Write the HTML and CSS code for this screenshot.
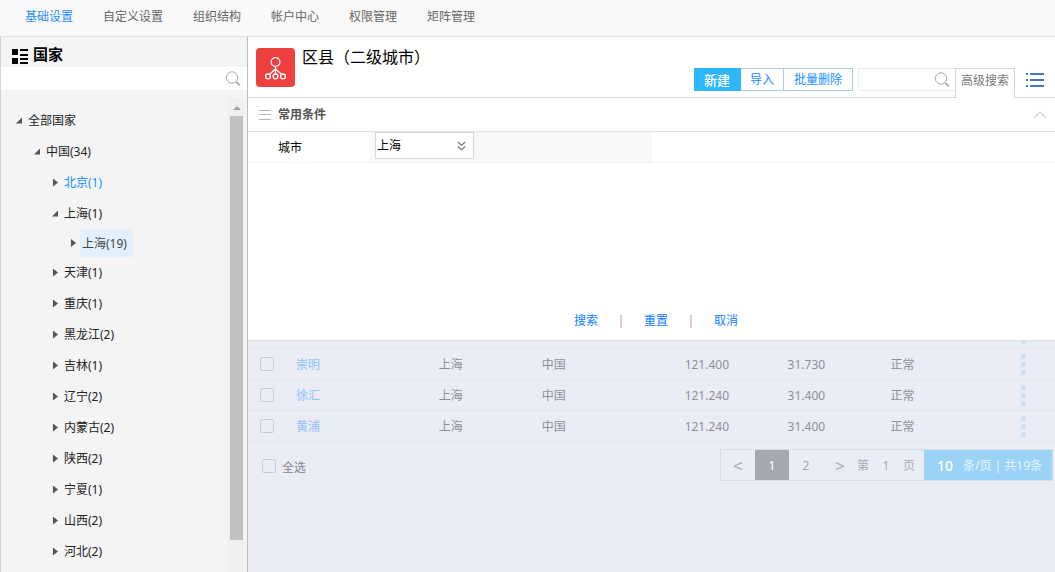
FILE: index.html
```html
<!DOCTYPE html>
<html lang="zh-CN">
<head>
<meta charset="utf-8">
<meta name="viewport" content="width=device-width, initial-scale=1">
<title>基础设置</title>
<link rel="stylesheet" href="styles.css">
</head>
<body>
<nav class="topnav">
  <a class="active" href="#">基础设置</a>
  <a href="#">自定义设置</a>
  <a href="#">组织结构</a>
  <a href="#">帐户中心</a>
  <a href="#">权限管理</a>
  <a href="#">矩阵管理</a>
</nav>
<div class="layout">
  <aside class="sidebar">
    <h2 class="side-title">
      <svg width="16" height="15" viewBox="0 0 16 15" shape-rendering="crispEdges"><path d="M0 0h6v6H0zM0 9h6v6H0zM8 0h8v2H8zM8 5h8v2H8zM8 9h8v2H8zM8 13h8v2H8z"/></svg>
      国家
    </h2>
    <div class="side-search">
      <input type="text" aria-label="搜索国家">
      <button type="button" aria-label="查找"><svg class="glass" width="16" height="16" viewBox="0 0 16 16"><circle cx="7" cy="6.5" r="5.7"/><path class="handle" d="M11.3 11l3.4 3.4"/></svg></button>
    </div>
    <div class="tree-wrap">
      <ul class="tree">
        <li class="open"><a href="#">全部国家</a></li>
        <li class="open l2"><a href="#">中国(34)</a></li>
        <li class="l3"><a class="blue" href="#">北京(1)</a></li>
        <li class="open l3"><a href="#">上海(1)</a></li>
        <li class="l4"><a class="selected" href="#">上海(19)</a></li>
        <li class="l3"><a href="#">天津(1)</a></li>
        <li class="l3"><a href="#">重庆(1)</a></li>
        <li class="l3"><a href="#">黑龙江(2)</a></li>
        <li class="l3"><a href="#">吉林(1)</a></li>
        <li class="l3"><a href="#">辽宁(2)</a></li>
        <li class="l3"><a href="#">内蒙古(2)</a></li>
        <li class="l3"><a href="#">陕西(2)</a></li>
        <li class="l3"><a href="#">宁夏(1)</a></li>
        <li class="l3"><a href="#">山西(2)</a></li>
        <li class="l3"><a href="#">河北(2)</a></li>
      </ul>
      <div class="scrollbar"><span class="scroll-up"></span><span class="thumb"></span></div>
    </div>
  </aside>

  <main class="main">
    <header class="head">
      <svg class="logo" width="39" height="39" viewBox="0 0 39 39"><rect width="39" height="39" rx="4" fill="#ee413f"/><g fill="none" stroke="#fff" stroke-width="1.3"><circle cx="19.5" cy="14" r="4.4"/><circle cx="12" cy="28.4" r="2.4"/><circle cx="19.5" cy="28.4" r="2.4"/><circle cx="27" cy="28.4" r="2.4"/><path d="M19.5 18.5V26M19.5 21l-6 5.3M19.5 21l6 5.3"/></g></svg>
      <h1>区县<span class="paren" lang="zh-TW">（</span>二级城市<span class="paren" lang="zh-TW">）</span></h1>
      <div class="tools">
        <div class="btns">
          <button class="primary" type="button">新建</button>
          <button type="button">导入</button>
          <button type="button">批量删除</button>
        </div>
        <div class="head-search">
          <input type="text" aria-label="搜索">
          <button type="button" aria-label="查找"><svg class="glass" width="16" height="16" viewBox="0 0 16 16"><circle cx="7" cy="6.5" r="5.7"/><path class="handle" d="M11.3 11l3.4 3.4"/></svg></button>
        </div>
        <button class="tab" type="button">高级搜索</button>
        <button class="list-btn" type="button" aria-label="列表"><svg width="18" height="14" viewBox="0 0 18 14" shape-rendering="crispEdges"><path fill="#457ab8" d="M0 0h2v2H0zM4 0h14v2H4zM0 6h2v2H0zM4 6h14v2H4zM0 12h2v2H0zM4 12h14v2H4z"/></svg></button>
      </div>
    </header>

    <div class="content">
      <table class="grid">
        <colgroup><col class="c-check"><col class="c-wide"><col class="c-mid"><col class="c-wide"><col class="c-mid"><col class="c-mid"><col class="c-state"><col></colgroup>
        <tbody>
          <tr><td></td><td></td><td></td><td></td><td></td><td></td><td></td><td class="more"><svg width="5" height="21" viewBox="0 0 5 21"><circle cx="2.5" cy="2.5" r="2.5"/><circle cx="2.5" cy="10.5" r="2.5"/><circle cx="2.5" cy="18.5" r="2.5"/></svg></td></tr>
          <tr><td><input type="checkbox" aria-label="崇明"></td><td><a href="#">崇明</a></td><td>上海</td><td>中国</td><td>121.400</td><td>31.730</td><td>正常</td><td class="more"><svg width="5" height="21" viewBox="0 0 5 21"><circle cx="2.5" cy="2.5" r="2.5"/><circle cx="2.5" cy="10.5" r="2.5"/><circle cx="2.5" cy="18.5" r="2.5"/></svg></td></tr>
          <tr><td><input type="checkbox" aria-label="徐汇"></td><td><a href="#">徐汇</a></td><td>上海</td><td>中国</td><td>121.240</td><td>31.400</td><td>正常</td><td class="more"><svg width="5" height="21" viewBox="0 0 5 21"><circle cx="2.5" cy="2.5" r="2.5"/><circle cx="2.5" cy="10.5" r="2.5"/><circle cx="2.5" cy="18.5" r="2.5"/></svg></td></tr>
          <tr><td><input type="checkbox" aria-label="黄浦"></td><td><a href="#">黄浦</a></td><td>上海</td><td>中国</td><td>121.240</td><td>31.400</td><td>正常</td><td class="more"><svg width="5" height="21" viewBox="0 0 5 21"><circle cx="2.5" cy="2.5" r="2.5"/><circle cx="2.5" cy="10.5" r="2.5"/><circle cx="2.5" cy="18.5" r="2.5"/></svg></td></tr>
        </tbody>
      </table>
      <div class="foot">
        <label class="all"><input type="checkbox"><span>全选</span></label>
        <div class="pager">
          <button class="arrow" type="button">&lt;</button>
          <button class="current" type="button">1</button>
          <button type="button">2</button>
          <button class="arrow" type="button">&gt;</button>
          <label class="goto">第<input type="text" value="1">页</label>
          <div class="size"><strong>10</strong><span>条/页 | 共19条</span></div>
        </div>
      </div>

      <form class="panel">
        <div class="panel-head">
          <svg width="12" height="10" viewBox="0 0 12 10" shape-rendering="crispEdges"><path fill="#b5b5b5" d="M0 0h12v1H0zM0 4h12v1H0zM0 9h12v1H0z"/></svg>
          <h3>常用条件</h3>
          <svg class="fold" width="12" height="7" viewBox="0 0 12 7"><path d="M.5 6.5L6 1l5.500 5.500" fill="none" stroke="#ccc" stroke-width="1.200"/></svg>
        </div>
        <div class="field">
          <label for="city">城市</label>
          <div class="value">
            <div class="select">
              <select id="city"><option>上海</option></select>
              <svg width="9" height="10" viewBox="0 0 9 10"><path d="M.8 1l3.700 3.200L8.200 1M.8 5.500l3.700 3.200 3.700-3.200" fill="none" stroke="#777" stroke-width="1.200"/></svg>
            </div>
          </div>
        </div>
        <div class="actions">
          <button type="button">搜索</button><i></i><button type="button">重置</button><i></i><button type="button">取消</button>
        </div>
      </form>
    </div>
  </main>
</div>
</body>
</html>
```

FILE: styles.css
```css
* { box-sizing: border-box; }
body {
  margin: 0;
  height: 100vh;
  display: flex;
  flex-direction: column;
  overflow: hidden;
  font: 12px/18px "Noto Sans", "Noto Sans CJK SC", sans-serif;
  color: #222;
  background: #fff;
}
a { color: inherit; text-decoration: none; }
button, input, select { font: inherit; color: inherit; margin: 0; padding: 0; border: 0; background: none; outline: 0; }
svg { display: block; flex: none; }
h1, h2, h3, ul { margin: 0; padding: 0; }
.glass { fill: none; stroke: #aaa; stroke-width: 1; }
.glass .handle { stroke-width: 2; }

.topnav {
  flex: none;
  display: flex;
  align-items: center;
  gap: 30px;
  height: 37px;
  padding: 0 25px 2px;
  background: #f8f8f8;
  border-bottom: 1px solid #e2e2e2;
  color: #666;
}
.topnav .active { color: #2690f5; }

.layout { flex: 1; display: flex; min-height: 0; }

.sidebar {
  flex: 0 0 248px;
  display: flex;
  flex-direction: column;
  background: #f4f4f4;
  border-left: 1px solid #d4d4d4;
  border-right: 1px solid #bdbdbd;
}
.side-title {
  display: flex;
  align-items: center;
  gap: 5px;
  height: 30px;
  padding: 4px 11px 0;
  font-size: 15px;
  line-height: 20px;
  color: #000;
}
.side-title svg { margin-top: 4px; }
.side-search { display: flex; height: 23px; background: #fff; padding-right: 6px; align-items: center; }
.side-search input { flex: 1; min-width: 0; height: 23px; padding: 0 8px; }
.tree-wrap { flex: 1; display: flex; min-height: 0; margin-top: 8px; }
.tree { flex: 1; list-style: none; padding-top: 7px; overflow: hidden; }
.tree li { display: flex; align-items: center; gap: 6px; height: 31px; padding-left: 15px; white-space: nowrap; }
.tree li::before { content: ""; width: 6px; height: 8px; background: #555; clip-path: polygon(16% 0, 100% 50%, 16% 100%); }
.tree li.open::before { height: 6px; clip-path: polygon(100% 0, 100% 100%, 0 100%); }
.tree .l2 { padding-left: 33px; }
.tree .l3 { padding-left: 51px; }
.tree .l4 { padding-left: 69px; height: 28px; gap: 4px; }
.tree .blue { color: #1890ff; }
.tree .selected { background: #e2f0fc; color: #444; padding: 1px 6px 0 2px; line-height: 27px; }
.scrollbar { flex: 0 0 17px; display: flex; flex-direction: column; align-items: center; background: #f0f0f0; margin-right: 2px; padding-bottom: 32px; }
.scroll-up { height: 18px; display: flex; align-items: center; padding-top: 2px; }
.scroll-up::before { content: ""; border: 4px solid transparent; border-top: 0; border-bottom-color: #a0a0a0; }
.thumb { flex: 1; width: 13px; background: #c0c0c0; }

.main { flex: 1; min-width: 0; display: flex; flex-direction: column; }
.head { flex: none; display: flex; height: 61px; padding: 0 0 0 8px; border-bottom: 1px solid #d4d4d4; }
.logo { margin-top: 11px; }
.head h1 { margin: 7px 0 0 7px; font-size: 16px; line-height: 24px; font-weight: 400; color: #000; white-space: nowrap; }
.paren { font-family: "Noto Sans CJK TC", sans-serif; }
.tools { display: flex; margin: 31px 0 0 auto; }
.btns { display: flex; height: 23px; color: #1890ff; }
.btns button { border: 1px solid #a9cbf2; border-left-width: 0; padding: 1px 10px 0; white-space: nowrap; }
.btns button:nth-child(2) { padding: 1px 9px 0; }
.btns .primary { background: #2db7ff; border-color: #2db7ff; color: #fff; font-size: 13px; font-weight: 500; }
.head-search { display: flex; align-items: center; width: 98px; height: 23px; margin-left: 5px; border: 1px solid #eee; border-right: 0; padding-right: 6px; }
.head-search input { flex: 1; min-width: 0; height: 21px; padding: 0 4px; }
.tab { width: 60px; height: 30px; margin-left: -1px; padding-bottom: 6px; background: #fff; border: 1px solid #d4d4d4; border-bottom: 0; color: #777; position: relative; z-index: 3; }
.list-btn { width: 40px; height: 24px; display: flex; align-items: center; justify-content: center; }

.content { flex: 1; min-height: 0; position: relative; background: #e9ecf5; }
.grid { width: 100%; table-layout: fixed; border-collapse: separate; border-spacing: 0; margin-top: 220px; color: #8f9097; }
.c-check { width: 38px; }
.c-wide { width: 17.7%; }
.c-mid { width: 12.76%; }
.c-state { width: 10%; }
.grid td { height: 31px; padding: 2px 10px 0; border-bottom: 1px solid #e1e4ec; white-space: nowrap; vertical-align: middle; }
.grid td:first-child { padding: 0 0 1px 12px; }
.grid a { color: #8fc1f6; }
.grid .more { padding: 0 29px 0 0; }
.grid .more svg { fill: #c9e0f7; margin-left: auto; }
input[type="checkbox"] { appearance: none; display: block; width: 14px; height: 14px; border: 1px solid #cbcdd5; border-radius: 2px; }
.foot { display: flex; justify-content: space-between; padding: 7px 2px 0 14px; color: #85868d; }
.all { display: flex; align-items: center; gap: 6px; height: 34px; }
.all span { padding-top: 3px; }
.pager { display: flex; height: 32px; border: 1px solid #d9dbe5; color: #a9abb4; }
.pager button { width: 34px; padding-top: 2px; }
.pager .current { background: #a6a8b1; color: #fff; }
.pager .arrow { font-size: 17px; }
.goto { display: flex; align-items: center; padding-top: 2px; }
.goto input { width: 34px; text-align: center; }
.size { display: flex; align-items: center; gap: 10px; margin-left: 9px; padding: 2px 10px 0 13px; background: #9bd3f7; color: #e9f3fc; white-space: nowrap; }
.size strong { font-size: 14px; font-weight: 500; color: #fff; }

.panel { position: absolute; top: 0; left: 0; right: 0; height: 243px; display: flex; flex-direction: column; background: #fff; border-bottom: 1px solid #dedede; }
.panel-head { display: flex; align-items: center; gap: 7px; height: 34px; padding: 0 9px 0 11px; border-bottom: 1px solid #e4e4e4; }
.panel-head h3 { font-size: 12px; line-height: 18px; color: #555; }
.fold { margin-left: auto; }
.field { display: flex; height: 31px; border-bottom: 1px solid #f0f0f0; color: #000; }
.field label { width: 122px; padding: 1px 0 0 30px; line-height: 30px; }
.value { width: 35%; background: #f8f8f8; padding-left: 5px; }
.select { position: relative; width: 99px; height: 27px; }
.select select { appearance: none; width: 100%; height: 100%; padding: 0 20px 0 1px; border: 1px solid #d4d7df; background: #fff; }
.select svg { position: absolute; right: 8px; top: 9px; pointer-events: none; }
.actions { display: flex; justify-content: center; align-items: center; gap: 22px; margin: auto 0 10px; padding-left: 9px; color: #1080ff; }
.actions i { width: 2px; height: 13px; background: #e0d0cc; }
```
